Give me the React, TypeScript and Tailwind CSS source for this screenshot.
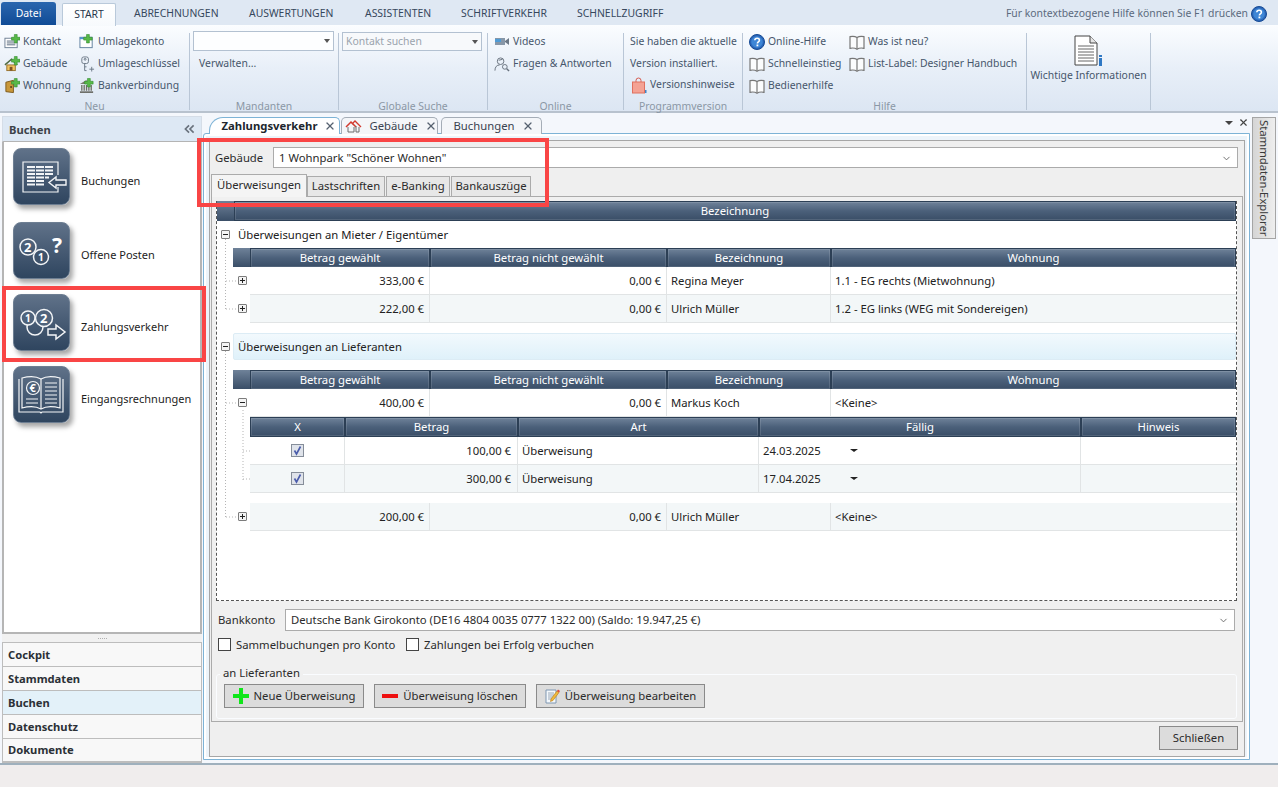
import type { ReactNode } from "react";
import { ChevronDown, X } from "lucide-react";

const GreenPlus = ({ x = 8, y = 0 }: { x?: number; y?: number }) => (
  <path transform={`translate(${x} ${y})`} d="M3 0h3v3h3v3H6v3H3V6H0V3h3z" fill="#58b947" stroke="#2f8a2c" strokeWidth=".6" />
);

function KontaktIcon() {
  return (
    <svg width="17" height="16" viewBox="0 0 17 16">
      <rect x="1" y="4" width="13" height="10" fill="#fff" stroke="#6d7f93" />
      <path d="M3 7h8M3 9h9M3 11h9" stroke="#56677b" />
      <GreenPlus x={8} y={0} />
    </svg>
  );
}
function HouseIcon() {
  return (
    <svg width="17" height="16" viewBox="0 0 17 16">
      <path d="M1 9 8 3l6 6" fill="none" stroke="#4d6b45" strokeWidth="1.6" />
      <rect x="3" y="9" width="9" height="6" fill="#f0c35f" stroke="#96702d" />
      <rect x="6" y="11" width="3" height="4" fill="#7b5325" />
      <GreenPlus x={8} y={0} />
    </svg>
  );
}
function DoorIcon() {
  return (
    <svg width="17" height="16" viewBox="0 0 17 16">
      <path d="M2 4l8-2v13l-8-1z" fill="#c9983a" stroke="#7c5a1d" />
      <circle cx="7.5" cy="9" r="1" fill="#4b3a1d" />
      <GreenPlus x={8} y={0} />
    </svg>
  );
}
function WindowIcon() {
  return (
    <svg width="17" height="16" viewBox="0 0 17 16">
      <rect x="1" y="3" width="13" height="11" fill="#fff" stroke="#5f7f9d" />
      <rect x="1" y="3" width="13" height="2" fill="#4d93cf" />
      <GreenPlus x={5} y={0} />
    </svg>
  );
}
function KeyIcon() {
  return (
    <svg width="17" height="16" viewBox="0 0 17 16" fill="none" stroke="#6b7785">
      <rect x="3" y="0.5" width="7" height="7" rx="2" />
      <circle cx="6.5" cy="3" r="1" />
      <path d="M6 8v7h2M6 11h2M11 13.5h5M13.5 11v5" />
    </svg>
  );
}
function BankIcon() {
  return (
    <svg width="17" height="16" viewBox="0 0 17 16">
      <path d="M1 6h13L7.5 2z" fill="#7a7a70" />
      <path d="M3 7v6M5.5 7v6M8 7v6M10.5 7v6M13 7v6" stroke="#6d6d62" strokeWidth="1.4" />
      <path d="M1 14.5h14" stroke="#55554c" strokeWidth="1.5" />
      <GreenPlus x={6} y={0} />
    </svg>
  );
}
function VideoIcon() {
  return (
    <svg width="16" height="16" viewBox="0 0 16 16">
      <rect x="1" y="4" width="10" height="7" fill="#8797a8" />
      <rect x="1" y="5" width="6" height="3" fill="#4f9bd5" />
      <path d="M11 7l4-3v7l-4-3z" fill="#6b7886" />
    </svg>
  );
}
function FaqIcon() {
  return (
    <svg width="17" height="17" viewBox="0 0 17 17" fill="none" stroke="#66707c">
      <circle cx="7" cy="5" r="3.5" />
      <path d="M1 15c0-4 2-6 5-6M5 4l4-1" />
      <circle cx="11.5" cy="11" r="2.5" />
      <path d="m13.5 13 2.5 2.5" strokeWidth="1.5" />
    </svg>
  );
}
function BagIcon() {
  return (
    <svg width="16" height="17" viewBox="0 0 16 17">
      <path d="M5 5V3.5a2.5 2.5 0 0 1 5 0V5" fill="none" stroke="#d65b50" />
      <rect x="1.5" y="5" width="12" height="11" fill="#f4a294" stroke="#e0705f" />
      <rect x="14" y="13" width="1.5" height="3" fill="#3f86c9" />
    </svg>
  );
}
function HelpIcon({ size = 16 }: { size?: number }) {
  return (
    <svg width={size} height={size} viewBox="0 0 16 16">
      <circle cx="8" cy="8" r="7.5" fill="#2a66b8" stroke="#164a94" />
      <circle cx="8" cy="8" r="5.8" fill="#3e86d6" />
      <path d="M5.8 6.2c.2-2.6 4.6-2.6 4.6 0 0 1.7-2 1.7-2 3.3" fill="none" stroke="#fff" strokeWidth="1.6" />
      <rect x="7.5" y="10.5" width="1.8" height="1.8" fill="#fff" />
    </svg>
  );
}
function BookIcon() {
  return (
    <svg width="16" height="15" viewBox="0 0 16 15" fill="#fbfcfd" stroke="#777" strokeWidth="1.2">
      <path d="M8 2.5C6 1.3 3.5 1.2 1 1.7v11.600c2.500-.5 5-.4 7 .9 2-1.300 4.500-1.400 7-.9V1.700c-2.500-.5-5-.4-7 .8z" />
      <path d="M8 2.5V14" />
    </svg>
  );
}

function RibbonItem({ icon, children, className = "" }: { icon?: ReactNode; children: ReactNode; className?: string }) {
  return (
    <div className={"flex h-[22px] items-center gap-[3px] whitespace-nowrap " + className}>
      {icon && <span className="flex w-[16px] shrink-0 justify-center">{icon}</span>}
      <span>{children}</span>
    </div>
  );
}

function RibbonGroup({ label, className, children }: { label?: string; className: string; children?: ReactNode }) {
  return (
    <div className={"flex h-full shrink-0 flex-col " + className}>
      <div className="min-h-0 flex-1">{children}</div>
      <div className="h-[10px] text-center leading-[10px] text-[#8b97a5]">{label}</div>
    </div>
  );
}

const Sep = () => <div className="mt-[8px] h-[77px] w-px shrink-0 bg-[#b9c6d6]" />;

const Caret = () => <span className="h-0 w-0 border-x-[3px] border-t-[4px] border-x-transparent border-t-[#555]" />;

function Ribbon() {
  return (
    <div className="flex h-[88px] border-b-2 border-[#b8c2ce] bg-linear-to-b from-[#fbfdff] via-[#e8eff8] to-[#dce6f3] text-[10.4px] text-[#46566b]">
      <RibbonGroup label="Neu" className="w-[189px]">
        <div className="flex pt-[6px]">
          <div className="ml-[4px] w-[76px]">
            <RibbonItem icon={<KontaktIcon />}>Kontakt</RibbonItem>
            <RibbonItem icon={<HouseIcon />}>Gebäude</RibbonItem>
            <RibbonItem icon={<DoorIcon />}>Wohnung</RibbonItem>
          </div>
          <div className="-ml-[1px]">
            <RibbonItem icon={<WindowIcon />}>Umlagekonto</RibbonItem>
            <RibbonItem icon={<KeyIcon />}>Umlageschlüssel</RibbonItem>
            <RibbonItem icon={<BankIcon />}>Bankverbindung</RibbonItem>
          </div>
        </div>
      </RibbonGroup>
      <Sep />
      <RibbonGroup label="Mandanten" className="w-[148px]">
        <div className="ml-[3px] mt-[6px] flex h-[20px] w-[141px] items-center justify-end border border-[#b3c1d1] bg-[#fdfeff] pr-[3px]">
          <Caret />
        </div>
        <div className="ml-[9px] mt-[2px] flex h-[22px] items-center">Verwalten...</div>
      </RibbonGroup>
      <Sep />
      <RibbonGroup label="Globale Suche" className="w-[148px]">
        <div className="ml-[3px] mt-[7px] flex h-[19px] w-[140px] items-center justify-between border border-[#b3c1d1] bg-[#f7f9fb] px-[3px] pt-px text-[#9aa3ad]">
          Kontakt suchen
          <Caret />
        </div>
      </RibbonGroup>
      <Sep />
      <RibbonGroup label="Online" className="w-[135px]">
        <div className="ml-[6px] pt-[6px]">
          <RibbonItem icon={<VideoIcon />} className="gap-[3px]">Videos</RibbonItem>
          <RibbonItem icon={<FaqIcon />} className="gap-[3px]">Fragen &amp; Antworten</RibbonItem>
        </div>
      </RibbonGroup>
      <Sep />
      <RibbonGroup label="Programmversion" className="w-[118px]">
        <div className="ml-[6px] pt-[6px]">
          <div className="flex h-[22px] items-center whitespace-nowrap">Sie haben die aktuelle</div>
          <div className="flex h-[21px] items-center whitespace-nowrap">Version installiert.</div>
          <RibbonItem icon={<BagIcon />} className="ml-[1px] gap-[2px]">Versionshinweise</RibbonItem>
        </div>
      </RibbonGroup>
      <Sep />
      <RibbonGroup label="Hilfe" className="w-[283px]">
        <div className="flex pt-[6px] pl-[6px]">
          <div className="w-[100px]">
            <RibbonItem icon={<HelpIcon />}>Online-Hilfe</RibbonItem>
            <RibbonItem icon={<BookIcon />}>Schnelleinstieg</RibbonItem>
            <RibbonItem icon={<BookIcon />}>Bedienerhilfe</RibbonItem>
          </div>
          <div>
            <RibbonItem icon={<BookIcon />}>Was ist neu?</RibbonItem>
            <RibbonItem icon={<BookIcon />}>List-Label: Designer Handbuch</RibbonItem>
          </div>
        </div>
      </RibbonGroup>
      <Sep />
      <RibbonGroup className="w-[123px]">
        <div className="flex flex-col items-center pt-[10px]">
          <svg width="30" height="32" viewBox="0 0 30 32">
            <path d="M1 1h15l7 7v22H1z" fill="#fff" stroke="#444" />
            <path d="M16 1v7h7" fill="#e5e5e5" stroke="#444" />
            <path d="M4 11h16M4 14h16M4 17h16M4 20h16M4 23h16M4 26h16" stroke="#666" />
            <path d="M25 20h3v2h-3zM25 23h3v8h-3z" fill="#2f78c4" />
          </svg>
          <div className="mt-[1px] whitespace-nowrap">Wichtige Informationen</div>
        </div>
      </RibbonGroup>
      <Sep />
    </div>
  );
}

const menuTabs = [
  { label: "ABRECHNUNGEN", width: "w-[115px]" },
  { label: "AUSWERTUNGEN", width: "w-[116px]" },
  { label: "ASSISTENTEN", width: "w-[96px]" },
  { label: "SCHRIFTVERKEHR", width: "w-[116px]" },
  { label: "SCHNELLZUGRIFF", width: "w-[116px]" },
];

function MenuBar() {
  return (
    <div className="flex h-[25px] items-end bg-[#dfe8f3] pl-[1px] text-[10.4px] text-[#36475c]">
      <div className="flex h-[23px] w-[55px] items-center justify-center rounded-t-[3px] bg-linear-to-b from-[#2a66ae] to-[#0f4b96] text-white">Datei</div>
      <div className="relative top-[1px] ml-[6px] mr-[18px] flex h-[23px] w-[54px] items-center justify-center rounded-t-[2px] border border-b-0 border-[#b9c9da] bg-linear-to-b from-[#fff] to-[#f7fafd] text-[#26364a]">START</div>
      {menuTabs.map((t) => (
        <div key={t.label} className={"flex h-[23px] items-center whitespace-nowrap " + t.width}>{t.label}</div>
      ))}
      <div className="ml-auto mr-[11px] flex h-[23px] items-center gap-[3px] text-[#5b6a7d]">
        Für kontextbezogene Hilfe können Sie F1 drücken
        <HelpIcon />
      </div>
    </div>
  );
}

const Tile = ({ children }: { children: ReactNode }) => (
  <div className="flex h-[57px] w-[57px] shrink-0 items-center justify-center rounded-[8px] border border-[#6d7e92] bg-linear-to-b from-[#607289] to-[#2f455f] shadow-[3px_4px_5px_rgba(0,0,0,0.35)]">
    <svg width="57" height="57" viewBox="0 0 57 57" fill="none" stroke="#f3f5f7" strokeWidth="1.2" className="shrink-0">{children}</svg>
  </div>
);

const navItems: { label: string; className: string; art: ReactNode }[] = [
  {
    label: "Buchungen",
    className: "mt-[6px]",
    art: (
      <>
        <path d="M45 27V14H10v30h35v-5" />
        <path d="M14 19h8M23 19h8M32 19h8M14 22.5h8M23 22.5h8M32 22.5h8M14 26h8M23 26h8M32 26h8M14 29.5h8M23 29.5h8M32 29.5h4M14 33h8M23 33h8M14 36.5h8M23 36.5h8" strokeWidth="2" />
        <path d="M36 34.5l7-5.5v3h10v5H43v3z" fill="#3d5169" strokeWidth="1.4" />
      </>
    ),
  },
  {
    label: "Offene Posten",
    className: "mt-[17px]",
    art: (
      <>
        <circle cx="15" cy="25" r="8" strokeWidth="1.5" />
        <circle cx="28" cy="35" r="7.5" fill="#3f536b" strokeWidth="1.5" />
        <text x="11" y="30" fill="#fff" stroke="none" fontSize="13" fontWeight="700">2</text>
        <text x="25" y="39" fill="#fff" stroke="none" fontSize="10" fontWeight="700">1</text>
        <text x="39" y="31" fill="#fff" stroke="none" fontSize="21" fontWeight="700">?</text>
      </>
    ),
  },
  {
    label: "Zahlungsverkehr",
    className: "mt-[15px]",
    art: (
      <>
        <circle cx="22" cy="33" r="8" strokeWidth="1.5" />
        <circle cx="15" cy="24" r="7" fill="#4f637b" strokeWidth="1.5" />
        <circle cx="31" cy="24" r="8.5" fill="#4f637b" strokeWidth="1.5" />
        <text x="12" y="28" fill="#fff" stroke="none" fontSize="10" fontWeight="700">1</text>
        <text x="27" y="29" fill="#fff" stroke="none" fontSize="13" fontWeight="700">2</text>
        <path d="M35 35h8v-4l9 7-9 7v-4h-8z" fill="#3a4e66" strokeWidth="1.5" />
      </>
    ),
  },
  {
    label: "Eingangsrechnungen",
    className: "mt-[15px]",
    art: (
      <>
        <path d="M6 13v33h21l1 1 1-1h21V13" />
        <path d="M9 42V12c7-2 14-2 19 1 5-3 12-3 19-1v30c-7-2-14-2-19 1-5-3-12-3-19-1z" />
        <path d="M28 13v30" />
        <circle cx="20" cy="22" r="6.5" />
        <text x="16.5" y="26" fill="#fff" stroke="none" fontSize="11" fontWeight="700">€</text>
        <path d="M32 17h12M32 21h12M32 25h12M32 29h12M32 33h12M32 37h12M13 33h12M13 37h12" />
      </>
    ),
  },
];

const bottomNav = ["Cockpit", "Stammdaten", "Buchen", "Datenschutz", "Dokumente"];

function Sidebar() {
  return (
    <div className="ml-[2px] flex h-[650px] w-[200px] shrink-0 flex-col text-[11.2px]">
      <div className="flex h-[29px] items-end bg-[#f4f7fc]">
        <div className="flex h-[26px] w-full items-center justify-between border border-[#d5dde7] border-b-[#b4b4b4] bg-[#dde8f4] pl-[6px] pr-[6px] pt-[3px] font-bold text-[#3c4248]">
          Buchen
          <svg width="11" height="10" viewBox="0 0 12 10" fill="none" stroke="#69727d" strokeWidth="1.8" className="-mt-[3px]"><path d="M5.5 1 1.5 5l4 4M10.5 1l-4 4 4 4" /></svg>
        </div>
      </div>
      <div className="h-[492px] border-x-2 border-b-2 border-[#b5b5b5] bg-white pl-[9px] text-[11px] text-[#1d1d1d]">
        {navItems.map((n) => (
          <div key={n.label} className={"flex items-center gap-[11px] " + n.className}>
            <Tile>{n.art}</Tile>
            <span className="whitespace-nowrap pt-[9px]">{n.label}</span>
          </div>
        ))}
      </div>
      <div className="flex h-[8px] items-center justify-center gap-px bg-[#f1f1f1]">
        {[0, 1, 2, 3, 4].map((i) => <i key={i} className="h-px w-px bg-[#b0b0b0]" />)}
      </div>
      {bottomNav.map((n) => (
        <div key={n} className={"flex h-[24px] shrink-0 items-center border border-b-0 border-[#bdbdbd] pl-[5px] pt-px font-bold text-[#2b3036] last:h-[25px] last:border-b-2 " + (n === "Buchen" ? "bg-[#e3f1f9]" : "bg-[#f8f8f8]")}>{n}</div>
      ))}
    </div>
  );
}

const DocTab = ({ active, className, children }: { active?: boolean; className: string; children: ReactNode }) => (
  <div className={"relative top-px flex h-[17px] items-center gap-[7px] whitespace-nowrap rounded-t-[5px] border border-b-0 " + (active ? "z-10 rounded-tl-[14px] border-[#7db3d6] bg-white font-bold text-[#20262d] " : "border-[#a5adb7] bg-[#f4f6f9] text-[#3a4350] ") + className}>
    {children}
    <X size={12} strokeWidth={2.5} className="text-[#566170]" />
  </div>
);

const headerCell = "flex items-center justify-center border border-[#2c3f55] bg-linear-to-b from-[#6f8299] via-[#4b607a] to-[#3a4e67] pt-px text-white shadow-[inset_0_0_0_1px_rgba(255,255,255,0.12)]";
const tableCols = "grid grid-cols-[180px_237px_164px_1fr]";
const paymentCols = "grid grid-cols-[95px_173px_241px_322px_1fr]";

const Expander = ({ open, className }: { open?: boolean; className: string }) => (
  <span className={"absolute flex h-[9px] w-[9px] items-center justify-center rounded-[1px] border border-[#7c7c7c] bg-[#f4f4f4] " + className}>
    <i className="absolute h-px w-[5px] bg-[#222]" />
    {!open && <i className="absolute h-[5px] w-px bg-[#222]" />}
  </span>
);

function TableHead({ titles }: { titles: string[] }) {
  return (
    <div className="ml-[16px] flex h-[19px]">
      <div className="w-[17px] shrink-0 bg-linear-to-b from-[#6f8299] to-[#3a4e67]" />
      <div className={"flex-1 " + tableCols}>
        {titles.map((t) => <div key={t} className={headerCell}>{t}</div>)}
      </div>
    </div>
  );
}

const columns = ["Betrag gewählt", "Betrag nicht gewählt", "Bezeichnung", "Wohnung"];

function TenantRow({ row, alt, open, className = "" }: { row: string[]; alt?: boolean; open?: boolean; className?: string }) {
  return (
    <div className={"relative h-[28px] pl-[33px] " + className}>
      <Expander open={open} className="left-[21px] top-[9px]" />
      <div className={"h-full border-b border-[#e1e4e5] " + tableCols + (alt ? " bg-[#f3f7f8]" : " bg-white")}>
        <div className="flex items-center justify-end border-r border-[#e1e4e5] pr-[5px] pt-[2px]">{row[0]}</div>
        <div className="flex items-center justify-end border-r border-[#e1e4e5] pr-[5px] pt-[2px]">{row[1]}</div>
        <div className="flex items-center border-r border-[#e1e4e5] pl-[4px] pt-[2px]">{row[2]}</div>
        <div className="flex items-center pl-[4px] pt-[2px]">{row[3]}</div>
      </div>
    </div>
  );
}

function PaymentRow({ amount, due, alt }: { amount: string; due: string; alt?: boolean }) {
  return (
    <div className={"h-[28px] border-b border-[#e1e4e5] " + paymentCols + (alt ? " bg-[#f3f7f8]" : " bg-white")}>
      <div className="flex items-center justify-center border-r border-[#e1e4e5]">
        <span className="flex h-[13px] w-[13px] items-center justify-center border border-[#858d99] bg-[#dfe3ea]">
          <svg width="11" height="11" viewBox="0 0 11 11" fill="none" stroke="#4a5cab" strokeWidth="1.6"><path d="M2.5 5.5 4.5 9 8.5 1.5" /></svg>
        </span>
      </div>
      <div className="flex items-center justify-end border-r border-[#e1e4e5] pr-[6px] pt-[2px]">{amount}</div>
      <div className="flex items-center border-r border-[#e1e4e5] pl-[4px] pt-[2px]">Überweisung</div>
      <div className="flex items-center border-r border-[#e1e4e5] pl-[4px] pt-[2px]">
        <span className="w-[87px]">{due}</span>
        <span className="-mt-[2px] h-0 w-0 border-x-[4px] border-t-[3px] border-x-transparent border-t-[#222]" />
      </div>
      <div />
    </div>
  );
}

function DataGrid() {
  return (
    <div className="relative h-[400px] border border-t-0 border-dashed border-[#555] bg-white text-[#222]">
      <div className="flex h-[20px]">
        <div className="w-[17px] shrink-0 bg-linear-to-b from-[#6f8299] to-[#3a4e67]" />
        <div className={"flex-1 " + headerCell}>Bezeichnung</div>
      </div>
      <div className="ml-[21px] flex h-[27px] items-center pt-[2px]">Überweisungen an Mieter / Eigentümer</div>
      <TableHead titles={columns} />
      <TenantRow row={["333,00 €", "0,00 €", "Regina Meyer", "1.1 - EG rechts (Mietwohnung)"]} />
      <TenantRow alt row={["222,00 €", "0,00 €", "Ulrich Müller", "1.2 - EG links (WEG mit Sondereigen)"]} />
      <div className="ml-[16px] mt-[10px] flex h-[27px] items-center rounded-[2px] border border-[#dcecf5] bg-linear-to-b from-[#f2f9fd] to-[#dff1fa] pl-[4px] pt-[2px]">Überweisungen an Lieferanten</div>
      <div className="h-[10px]" />
      <TableHead titles={columns} />
      <TenantRow open row={["400,00 €", "0,00 €", "Markus Koch", "<Keine>"]} />
      <div className="ml-[33px]">
        <div className={"h-[20px] " + paymentCols}>
          {["X", "Betrag", "Art", "Fällig", "Hinweis"].map((t) => <div key={t} className={headerCell}>{t}</div>)}
        </div>
        <PaymentRow amount="100,00 €" due="24.03.2025" />
        <PaymentRow alt amount="300,00 €" due="17.04.2025" />
      </div>
      <TenantRow alt className="mt-[10px]" row={["200,00 €", "0,00 €", "Ulrich Müller", "<Keine>"]} />
      <Expander open className="left-[4px] top-[29px]" />
      <Expander open className="left-[4px] top-[141px]" />
      <svg className="pointer-events-none absolute left-0 top-0" width="40" height="330" fill="none" stroke="#b5b5b5" strokeDasharray="1 2">
        <path d="M8.5 38v70M8.5 150v166M9 80h12M9 108h12M9 202h12M9 316h12M26 209v70M26 250h7M26 278h7" />
      </svg>
    </div>
  );
}

const Check = ({ children, className = "" }: { children: string; className?: string }) => (
  <div className={"flex items-center gap-[5px] whitespace-nowrap " + className}>
    <span className="h-[13px] w-[13px] border border-[#444] bg-white" />
    <span className="pt-[2px]">{children}</span>
  </div>
);

const ActionButton = ({ icon, children, className }: { icon: ReactNode; children: string; className: string }) => (
  <div className={"flex h-[24px] items-center justify-center gap-[5px] whitespace-nowrap border border-[#8a8a8a] bg-[#dcdcdc] " + className}>
    {icon}
    {children}
  </div>
);

function DocPanel() {
  return (
    <div className="flex h-[617px] flex-col border border-[#a6a6a6] bg-[#efefef] text-[#2b2b2b]">
      <div className="mt-[6px] flex h-[21px] items-center pl-[5px] pr-[6px]">
        <span className="w-[58px] pt-px">Gebäude</span>
        <div className="flex h-full flex-1 items-center justify-between border border-[#ababab] bg-white pl-[5px] pr-[5px] pt-px">
          1 Wohnpark "Schöner Wohnen"
          <ChevronDown size={11} className="text-[#666]" />
        </div>
      </div>
      <div className="mt-[6px] flex h-[22px] items-end pl-[1px]">
        <div className="relative top-px z-10 flex h-[23px] w-[96px] items-center justify-center border border-b-0 border-[#ababab] bg-[#f4f4f4] pb-[2px]">Überweisungen</div>
        <div className="flex h-[20px] w-[78px] items-center justify-center border border-b-0 border-[#ababab] bg-[#e7e7e7] pb-[1px]">Lastschriften</div>
        <div className="ml-px flex h-[20px] w-[64px] items-center justify-center border border-b-0 border-[#ababab] bg-[#e7e7e7] pb-[1px]">e-Banking</div>
        <div className="ml-px flex h-[20px] w-[80px] items-center justify-center border border-b-0 border-[#ababab] bg-[#e7e7e7] pb-[1px]">Bankauszüge</div>
      </div>
      <div className="mx-[1px] h-[526px] border border-[#ababab] bg-[#f0f0f0] pl-[4px] pr-[5px] pt-[4px]">
        <DataGrid />
        <div className="mx-[2px] mt-[8px] flex h-[22px] items-center">
          <span className="w-[67px] pt-px">Bankkonto</span>
          <div className="flex h-full flex-1 items-center justify-between border border-[#ababab] bg-white pl-[5px] pr-[5px] pt-px">
            Deutsche Bank Girokonto (DE16 4804 0035 0777 1322 00) (Saldo: 19.947,25 €)
            <ChevronDown size={11} className="text-[#666]" />
          </div>
        </div>
        <div className="ml-[2px] mt-[6px] flex h-[15px] items-center">
          <Check className="w-[188px]">Sammelbuchungen pro Konto</Check>
          <Check>Zahlungen bei Erfolg verbuchen</Check>
        </div>
        <div className="relative mt-[22px] h-[45px] rounded-[3px] border border-[#fafcff] pl-[7px] pt-[9px]">
          <span className="absolute -top-[9px] left-[3px] bg-[#f0f0f0] px-[3px] leading-[14px]">an Lieferanten</span>
          <div className="flex gap-[10px]">
            <ActionButton className="w-[140px]" icon={<svg width="16" height="16" viewBox="0 0 16 16"><path d="M6 0h4v6h6v4h-6v6H6v-6H0V6h6z" fill="#10e61a" /></svg>}>Neue Überweisung</ActionButton>
            <ActionButton className="w-[152px]" icon={<svg width="16" height="16" viewBox="0 0 16 16"><rect y="6" width="16" height="4" fill="#ee1111" /></svg>}>Überweisung löschen</ActionButton>
            <ActionButton className="w-[169px]" icon={
              <svg width="15" height="16" viewBox="0 0 15 16">
                <path d="M1 2h10v13H1z" fill="#f4f8fc" stroke="#7f97b2" />
                <path d="M3 5h6M3 7h6M3 9h5M3 11h4" stroke="#9aa8b8" />
                <path d="m6 11 6-8 2 1.5-6 8-2.5 1z" fill="#f0b93c" stroke="#b27a1c" strokeWidth=".6" />
                <path d="m12 3 1-1.5 2 1.5-1 1.5z" fill="#e04a3a" />
              </svg>
            }>Überweisung bearbeiten</ActionButton>
          </div>
        </div>
      </div>
      <div className="flex flex-1 items-start justify-end pr-[6px] pt-[4px]">
        <div className="flex h-[24px] w-[79px] items-center justify-center border border-[#8a8a8a] bg-[#dcdcdc]">Schließen</div>
      </div>
    </div>
  );
}

function Workspace() {
  return (
    <div className="ml-[1px] flex min-w-0 flex-1 bg-[#f4f7fc]">
      <div className="w-[1047px] shrink-0">
        <div className="flex h-[20px] items-end pl-[6px]">
          <DocTab active className="w-[131px] justify-center pl-[9px]">Zahlungsverkehr</DocTab>
          <DocTab className="ml-[1px] w-[97px] justify-center pl-[3px]">
            <svg width="17" height="13" viewBox="0 0 17 13" fill="none">
              <path d="M1 7 6 2l5 5" stroke="#d23a2f" strokeWidth="1.5" />
              <path d="M7 4l3-3 6 6" stroke="#d23a2f" strokeWidth="1.3" />
              <path d="M3 7v5h6V7M11 6v6h3V7" stroke="#6d6d6d" />
            </svg>
            Gebäude
          </DocTab>
          <DocTab className="ml-[3px] w-[101px] justify-center pl-[4px]">Buchungen</DocTab>
          <div className="ml-auto mr-[1px] flex items-center gap-[5px] pb-[5px]">
            <span className="h-0 w-0 border-x-[4px] border-t-[4px] border-x-transparent border-t-[#444]" />
            <X size={11} strokeWidth={2.5} className="text-[#444]" />
          </div>
        </div>
        <div className="h-[627px] rounded-tl-[3px] border border-[#7db3d6] bg-[#edf4fa] pl-[5px] pr-[4px] pt-[6px] shadow-[inset_0_0_0_2px_#fff]">
          <DocPanel />
        </div>
      </div>
      <div className="ml-[2px] mt-[4px] flex h-[122px] w-[24px] items-center justify-center border border-[#a5a5a5] bg-linear-to-r from-[#d5d5d5] to-[#eeeeee] text-[#3a3a3a] [writing-mode:vertical-rl]">
        Stammdaten-Explorer
      </div>
    </div>
  );
}

export default function App() {
  return (
    <div className="relative flex h-[787px] w-[1278px] flex-col overflow-hidden bg-[#f0eded] font-['Open_Sans',sans-serif] text-[11.3px]">
      <MenuBar />
      <Ribbon />
      <div className="flex h-[650px] shrink-0 bg-[#f4f7fc]">
        <Sidebar />
        <Workspace />
      </div>
      <div className="h-[2px] bg-[#9fb0bd]" />
      <div className="pointer-events-none absolute left-[197px] top-[138px] h-[69px] w-[352px] border-4 border-[#f94545]" />
      <div className="pointer-events-none absolute left-[2px] top-[286px] h-[76px] w-[204px] border-4 border-[#f94545]" />
    </div>
  );
}
